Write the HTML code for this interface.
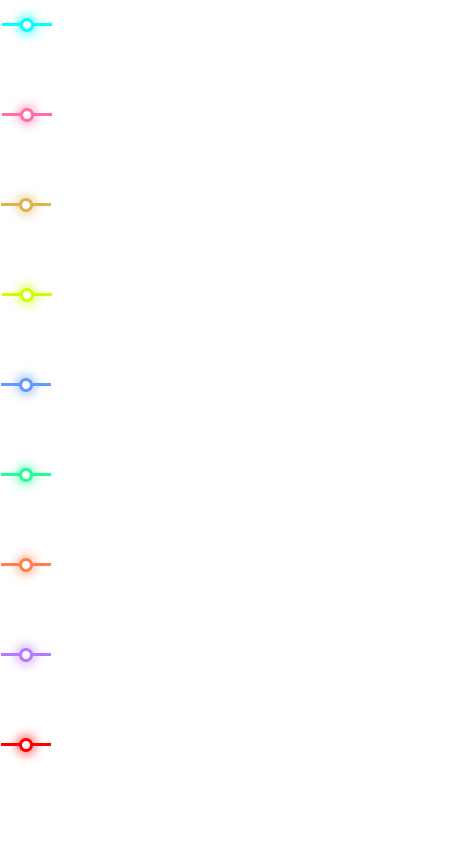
<!DOCTYPE html><html><head><style>
html,body{margin:0;background:#fff;width:468px;height:859px;overflow:hidden}
.r{position:absolute;left:2px;width:50px;height:2.5px}
.c{position:absolute;left:18px;top:-5.5px;width:8px;height:8px;border:3px solid;border-radius:50%;background:#fff}
</style></head><body>
<div class="r" style="top:23px;background:#0ff;color:#0ff;"><div class="c" style="box-shadow:0 0 9px 4px rgba(0,255,255,.5)"></div></div>
<div class="r" style="top:113px;background:#ff6fa8;color:#ff6fa8;"><div class="c" style="box-shadow:0 0 9px 4px rgba(255,111,168,.45)"></div></div>
<div class="r" style="top:203px;background:#ddb550;color:#ddb550;left:1px"><div class="c" style="box-shadow:0 0 9px 4px rgba(221,181,80,.45)"></div></div>
<div class="r" style="top:293px;background:#ccff00;color:#ccff00;"><div class="c" style="box-shadow:0 0 9px 4px rgba(204,255,0,.5)"></div></div>
<div class="r" style="top:383px;background:#6699ff;color:#6699ff;left:1px"><div class="c" style="box-shadow:0 0 9px 4px rgba(102,153,255,.45)"></div></div>
<div class="r" style="top:473px;background:#1fff99;color:#1fff99;left:1px"><div class="c" style="box-shadow:0 0 9px 4px rgba(31,255,153,.45)"></div></div>
<div class="r" style="top:563px;background:#ff7f50;color:#ff7f50;left:1px"><div class="c" style="box-shadow:0 0 9px 4px rgba(255,127,80,.45)"></div></div>
<div class="r" style="top:653px;background:#b57aff;color:#b57aff;left:1px"><div class="c" style="box-shadow:0 0 9px 4px rgba(181,122,255,.45)"></div></div>
<div class="r" style="top:743px;background:#f00;color:#f00;left:1px"><div class="c" style="box-shadow:0 0 9px 4px rgba(255,0,0,.45)"></div></div>
</body></html>
